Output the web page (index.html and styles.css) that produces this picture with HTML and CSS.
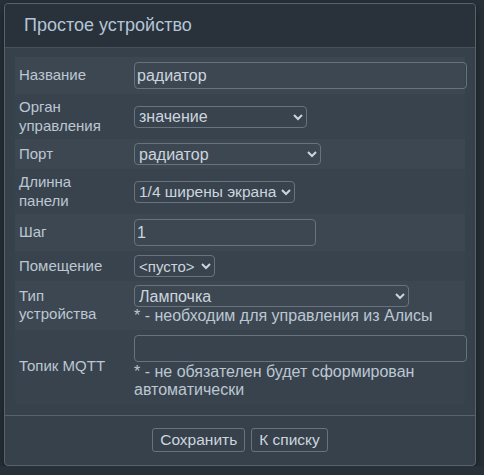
FILE: index.html
```html
<!DOCTYPE html>
<html lang="ru">
<head>
  <meta charset="UTF-8">
  <meta name="viewport" content="width=device-width, initial-scale=1.0">
  <title>Простое устройство</title>
  <link rel="stylesheet" href="styles.css">
</head>
<body>
  <div class="dialog">
    <div class="dialog-head">Простое устройство</div>
    <div class="dialog-body">
      <table class="form">
        <colgroup>
          <col class="col-label">
          <col class="col-value">
        </colgroup>
        <tr>
          <td class="label">Название</td>
          <td><input type="text" class="field field-wide" value="радиатор"></td>
        </tr>
        <tr>
          <td class="label">Орган<br>управления</td>
          <td>
            <select class="field w-control"><option>значение</option></select>
          </td>
        </tr>
        <tr>
          <td class="label">Порт</td>
          <td>
            <select class="field w-port"><option>радиатор</option></select>
          </td>
        </tr>
        <tr>
          <td class="label">Длинна<br>панели</td>
          <td>
            <select class="field w-size"><option>1/4 ширены экрана</option></select>
          </td>
        </tr>
        <tr>
          <td class="label">Шаг</td>
          <td><input type="text" class="field w-step" value="1"></td>
        </tr>
        <tr>
          <td class="label">Помещение</td>
          <td>
            <select class="field w-room"><option>&lt;пусто&gt;</option></select>
          </td>
        </tr>
        <tr>
          <td class="label">Тип<br>устройства</td>
          <td>
            <select class="field w-type"><option>Лампочка</option></select>
            <div class="note">* - необходим для управления из Алисы</div>
          </td>
        </tr>
        <tr>
          <td class="label">Топик MQTT</td>
          <td>
            <input type="text" class="field field-wide field-tall" value="">
            <div class="note">* - не обязателен будет сформирован автоматически</div>
          </td>
        </tr>
      </table>
    </div>
    <div class="dialog-foot">
      <button class="btn">Сохранить</button>
      <button class="btn">К списку</button>
    </div>
  </div>
</body>
</html>
```

FILE: styles.css
```css
body {
  margin: 0;
  padding: 3px 0 0 4px;
  background: #283038;
  font-family: 'Liberation Sans', Arial, sans-serif;
  color: #bcc7d2;
}
.dialog {
  width: 472px;
  box-sizing: border-box;
  border: 1px solid #58626d;
  border-radius: 4px;
  background: #37414c;
  box-shadow: 0 4px 10px rgba(0,0,0,0.45);
}
.dialog-head {
  height: 43px;
  line-height: 43px;
  padding-left: 19px;
  font-size: 18px;
  color: #b4c5d6;
  background: #29313b;
  border-bottom: 1px solid #48525d;
  border-radius: 3px 3px 0 0;
}
.dialog-body {
  padding: 9px 9px 11px 10px;
  border-bottom: 1px solid #58626d;
}
.form {
  width: 450px;
  table-layout: fixed;
  border-collapse: collapse;
  font-size: 15px;
}
.col-label { width: 115px; }
.col-value { width: 335px; }
.form tr:nth-child(odd) {
  background: #3d4752;
}
.form tr:nth-child(even) {
  background: #39434e;
}
.form td {
  padding: 4px;
  vertical-align: middle;
}
.form td.label {
  line-height: 18.5px;
}
.field {
  display: block;
  box-sizing: border-box;
  margin: 1px 0;
  font-family: 'Liberation Sans', Arial, sans-serif;
  font-size: 16px;
  color: #ccd5de;
  background: transparent;
  border: 1px solid #69737e;
  border-radius: 4px;
  outline: none;
}
input.field {
  height: 27px;
  padding: 0 2px;
}
select.field {
  height: 22px;
  margin: 0;
  padding: 0;
  color-scheme: dark;
}
select.field option {
  background: #37414c;
}
.field-wide { width: 333px; }
.field-tall { height: 28px; }
.w-control { width: 173px; }
.w-port { width: 187px; }
.w-size { width: 161px; font-size: 15.5px; }
.w-step { width: 182px; }
.w-room { width: 81px; font-size: 15px; }
.w-type { width: 275px; }
.note {
  font-size: 16px;
  line-height: 18.5px;
  color: #bcc7d2;
}
.dialog-foot {
  height: 49px;
  box-sizing: border-box;
  padding-top: 12px;
  display: flex;
  justify-content: center;
  align-items: flex-start;
  gap: 6px;
}
.btn {
  height: 24px;
  padding: 0 7px;
  font-family: 'Liberation Sans', Arial, sans-serif;
  font-size: 15.5px;
  color: #ccd5de;
  background: transparent;
  border: 1px solid #69737e;
  border-radius: 3px;
}
```
